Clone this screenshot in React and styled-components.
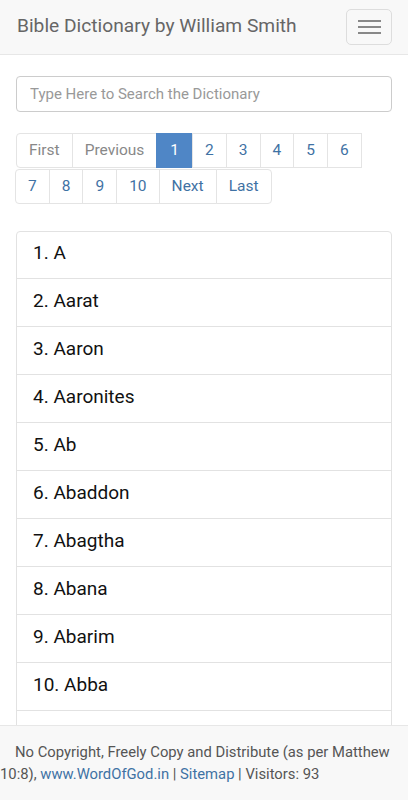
import React from "react";
import styled, { createGlobalStyle } from "styled-components";

const GlobalStyle = createGlobalStyle`
  * { box-sizing: border-box; }
  body {
    margin: 0;
    font-family: Roboto, "Liberation Sans", sans-serif;
    font-size: 15px;
    background: #fff;
    color: #212529;
  }
`;

const Navbar = styled.nav`
  display: flex;
  align-items: center;
  justify-content: space-between;
  height: 55px;
  padding: 0 16px 0 17px;
  background: #f8f8f8;
  border-bottom: 1px solid #e7e7e7;
`;

const Brand = styled.a`
  font-size: 19.2px;
  color: #666;
  text-decoration: none;
  margin-top: -3px;
`;

const Toggler = styled.button`
  width: 46px;
  height: 36px;
  margin-top: -1px;
  display: flex;
  flex-direction: column;
  align-items: center;
  justify-content: center;
  gap: 4px;
  background: transparent;
  border: 1px solid #ddd;
  border-radius: 5px;
  padding: 0;
`;

const Bar = styled.span`
  display: block;
  width: 23px;
  height: 2px;
  background: #888;
`;

const Main = styled.main`
  padding: 21px 16px 90px;
`;

const Search = styled.input`
  display: block;
  width: 100%;
  height: 36px;
  padding: 0 13px;
  font: inherit;
  font-size: 15px;
  color: #495057;
  border: 1px solid #ccc;
  border-radius: 4px;
  outline: none;
  &::placeholder { color: #999; }
`;

const Pager = styled.ul`
  display: flex;
  flex-wrap: wrap;
  row-gap: 1px;
  list-style: none;
  margin: 21px 0 27px -1px;
  padding: 0;
  width: 352px;
`;

const PageLink = styled.li`
  padding: 8px 12px;
  line-height: 17px;
  font-size: 15.5px;
  border: 1px solid #e4e4e4;
  margin-left: -1px;
  color: ${(p) => (p.$muted ? "#888" : "#3f72a4")};
  background: ${(p) => (p.$active ? "#4f86c6" : "#fff")};
  ${(p) => p.$active && "color: #fff; border-color: #4f86c6; padding: 8px 13px;"}
  ${(p) => p.$first && "border-radius: 4px 0 0 4px; margin-left: 0;"}
  ${(p) => p.$lead && "margin-left: 1px;"}
  ${(p) => p.$last && "border-radius: 0 4px 4px 0;"}
`;

const List = styled.ul`
  list-style: none;
  margin: 0;
  padding: 0;
  border: 1px solid #e2e2e2;
  border-radius: 4px;
`;

const Entry = styled.li`
  padding: 8px 16px 12px;
  line-height: 27px;
  font-size: 19px;
  color: #111;
  border-top: 1px solid #e2e2e2;
  &:first-child { border-top: 0; padding-top: 7px; }
`;

const Footer = styled.footer`
  position: fixed;
  left: 0;
  right: 0;
  bottom: 0;
  height: 75px;
  padding: 15px 0 0;
  background: #f8f8f8;
  border-top: 1px solid #e7e7e7;
  text-align: left;
  text-indent: 15px;
  font-size: 14.8px;
  line-height: 22px;
  color: #555;
`;

const FooterLink = styled.a`
  color: #3f72a4;
  text-decoration: none;
`;

const pages = [
  { label: "First", muted: true, first: true, lead: true },
  { label: "Previous", muted: true },
  { label: "1", active: true },
  { label: "2" },
  { label: "3" },
  { label: "4" },
  { label: "5" },
  { label: "6" },
  { label: "7", first: true },
  { label: "8" },
  { label: "9" },
  { label: "10" },
  { label: "Next" },
  { label: "Last", last: true },
];

const words = [
  "A",
  "Aarat",
  "Aaron",
  "Aaronites",
  "Ab",
  "Abaddon",
  "Abagtha",
  "Abana",
  "Abarim",
  "Abba",
  "Abda",
  "Abdeel",
];

const App = () => {
  return (
    <>
      <GlobalStyle />
      <Navbar>
        <Brand href="#">Bible Dictionary by William Smith</Brand>
        <Toggler aria-label="Toggle navigation">
          <Bar />
          <Bar />
          <Bar />
        </Toggler>
      </Navbar>
      <Main>
        <Search placeholder="Type Here to Search the Dictionary" />
        <Pager>
          {pages.map((p) => (
            <PageLink
              key={p.label}
              $muted={p.muted}
              $active={p.active}
              $first={p.first}
              $lead={p.lead}
              $last={p.last}
            >
              {p.label}
            </PageLink>
          ))}
        </Pager>
        <List>
          {words.map((w, i) => (
            <Entry key={w}>
              {i + 1}. {w}
            </Entry>
          ))}
        </List>
      </Main>
      <Footer>
        No Copyright, Freely Copy and Distribute (as per Matthew 10:8),{" "}
        <FooterLink href="#">www.WordOfGod.in</FooterLink> |{" "}
        <FooterLink href="#">Sitemap</FooterLink> | Visitors: 93
      </Footer>
    </>
  );
};

export default App;
